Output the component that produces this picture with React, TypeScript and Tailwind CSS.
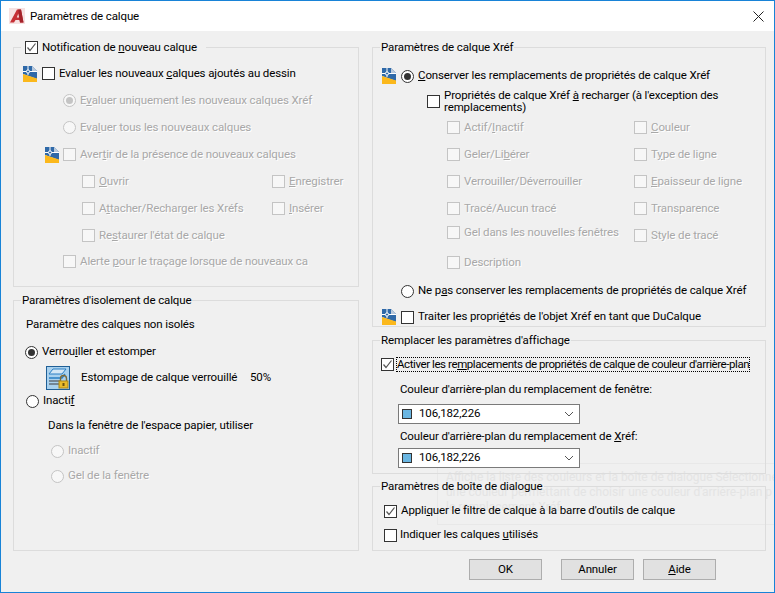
import type { ReactNode } from "react";

function LayerIcon() {
  return (
    <svg width="14" height="16" viewBox="0 0 14 16" className="shrink-0">
      <path d="M0 0H9L14 5V13L0 8Z" fill="#2f69a8" />
      <path d="M9 0L14 5H9Z" fill="#b9c9dc" />
      <path d="M0 8L14 12.5V16H0Z" fill="#fbb81c" />
      <path d="M0 5.5H14M5 0V9" stroke="#fff" strokeWidth="1" />
      <circle cx="5" cy="5.5" r="1.6" fill="#2f69a8" stroke="#fff" />
    </svg>
  );
}

function StackLockIcon() {
  return (
    <div className="w-6 h-6 border border-[#1f5f96] bg-[#a9d1ee] shrink-0">
      <svg width="22" height="22" viewBox="0 0 22 22">
        <path d="M2 7L6 2H19L15 7Z" fill="#d5e7f5" stroke="#2a7fc4" />
        <path d="M2 11H15L18 7" fill="none" stroke="#2a7fc4" strokeWidth="1.4" />
        <path d="M2 14H14" stroke="#5c6670" strokeWidth="1.4" />
        <path d="M2 17H12" stroke="#5c6670" strokeWidth="1.4" />
        <path d="M13.5 14V11.5A3 3 0 0 1 19.5 11.5V14" fill="none" stroke="#7b6a3a" strokeWidth="1.4" />
        <rect x="12" y="14" width="9" height="7" fill="#e8bb2a" stroke="#a98518" />
        <rect x="15.5" y="16" width="2" height="3" fill="#6d5410" />
      </svg>
    </div>
  );
}

function Logo() {
  return (
    <div className="w-4 h-4 bg-[#f6e2e2] flex items-center justify-center shrink-0">
      <svg width="16" height="16" viewBox="0 0 16 16">
        <path d="M1 14.5L8 1.5H12L14.5 14.5H11L10.5 12H6.5L5 14.5Z" fill="#c62f35" />
        <path d="M7.8 9.5H10L9.3 5.5Z" fill="#f6e2e2" />
        <path d="M12 1.5L14.5 14.5H11L9.2 1.5Z" fill="#a3232a" />
      </svg>
    </div>
  );
}

function Box({ checked, off }: { checked?: boolean; off?: boolean }) {
  return (
    <span
      className={
        off
          ? "w-[13px] h-[13px] border border-[#c4c4c4] bg-[#f7f7f7] shrink-0"
          : "w-[13px] h-[13px] border border-[#333333] bg-white shrink-0"
      }
    >
      {checked && (
        <svg width="11" height="11" viewBox="0 0 11 11" className="block">
          <path d="M1.5 5.5L4 8.5L9.5 1.5" fill="none" stroke="#555555" strokeWidth="1.2" />
        </svg>
      )}
    </span>
  );
}

function Dot({ checked, off }: { checked?: boolean; off?: boolean }) {
  return (
    <span
      className={
        off
          ? "w-[13px] h-[13px] rounded-full border border-[#c4c4c4] bg-[#f7f7f7] shrink-0 flex items-center justify-center"
          : "w-[13px] h-[13px] rounded-full border border-[#333333] bg-white shrink-0 flex items-center justify-center"
      }
    >
      {checked && (
        <span className={off ? "w-[7px] h-[7px] rounded-full bg-[#c4c4c4]" : "w-[7px] h-[7px] rounded-full bg-[#333333]"} />
      )}
    </span>
  );
}

function Label({ off, children }: { off?: boolean; children: ReactNode }) {
  return (
    <span className={off ? "whitespace-nowrap text-[#a8a8a8] [text-shadow:1px_1px_0_#fff]" : "whitespace-nowrap text-black"}>
      {children}
    </span>
  );
}

function Group({ title, className, children }: { title: ReactNode; className: string; children: ReactNode }) {
  return (
    <fieldset className={"border border-[#dcdcdc] min-w-0 " + className}>
      <legend className="ml-[7px] px-px h-4 leading-4 whitespace-nowrap">{title}</legend>
      {children}
    </fieldset>
  );
}

function Combo() {
  return (
    <div className="ml-[25px] w-[182px] h-[20px] border border-[#7a7a7a] bg-white flex items-center pl-[3px] pr-[5px]">
      <span className="w-[10px] h-[10px] border border-[#333333] bg-[#6ab6e2]" />
      <span className="ml-[7px]">106,182,226</span>
      <svg width="10" height="6" viewBox="0 0 10 6" className="ml-auto">
        <path d="M1 1L5 5L9 1" fill="none" stroke="#555555" />
      </svg>
    </div>
  );
}

function Button({ className, children }: { className: string; children: ReactNode }) {
  return (
    <button className={"w-[73px] h-[21px] border border-[#adadad] bg-[#e1e1e1] text-black leading-none " + className}>
      {children}
    </button>
  );
}

const xrefLeft: ReactNode[] = [
  <>Actif/<u>I</u>nactif</>,
  <>Geler/Li<u>b</u>érer</>,
  <>Verrouiller/Déverrouiller</>,
  <>Tracé/Aucun tracé</>,
  <>Gel dans les nouvelles fenêtres</>,
  <>Description</>,
];

const xrefRight: ReactNode[] = [
  <><u>C</u>ouleur</>,
  <>T<u>y</u>pe de ligne</>,
  <><u>E</u>paisseur de ligne</>,
  <>Transparence</>,
  <>Style de tracé</>,
];

export default function App() {
  return (
    <div
      className="relative w-[775px] h-[593px] border border-[#1883d7] bg-[#f0f0f0] overflow-hidden text-[11.5px] tracking-[-0.12px] text-black"
      style={{ fontFamily: 'Roboto, "Noto Sans", sans-serif' }}
    >
      {/* title bar */}
      <div className="h-[30px] bg-white flex items-center pl-2 pr-[10px]">
        <Logo />
        <span className="ml-[5px] mt-px">Paramètres de calque</span>
        <svg width="11" height="11" viewBox="0 0 11 11" className="ml-auto">
          <path d="M0.5 0.5L10.5 10.5M10.5 0.5L0.5 10.5" stroke="#222222" />
        </svg>
      </div>

      {/* ghost of a fading tooltip */}
      <div className="absolute left-[436px] top-[462px] w-[340px] h-[62px] border border-[#e8e8e8] pl-2 pt-[6px] leading-[15px] text-[#e4e4e4] text-[12px] tracking-normal whitespace-nowrap">
        <div>Affiche la liste des couleurs et la boîte de dialogue Sélectionner</div>
        <div>une couleur permettant de choisir une couleur d'arrière-plan p</div>
        <div>le remplacement Xréf</div>
      </div>

      <div className="relative z-10 flex pt-2 pl-3 gap-[13px]">
        {/* left column */}
        <div className="w-[346px] flex flex-col gap-[5px]">
          <Group
            className="h-[248px]"
            title={
              <span className="flex items-center gap-1 pl-[3px] pr-2">
                <Box checked />
                <span>Notification de <u>n</u>ouveau calque</span>
              </span>
            }
          >
            <div className="pt-[5px] flex flex-col [&>div]:h-[27px] [&>div]:flex [&>div]:items-center">
              <div className="pl-[9px]">
                <LayerIcon />
                <span className="ml-[5px] mr-1 flex"><Box /></span>
                <Label>Evaluer les nouveaux <u>c</u>alques ajoutés au dessin</Label>
              </div>
              <div className="pl-[49px] gap-1">
                <Dot checked off />
                <Label off>E<u>v</u>aluer uniquement les nouveaux calques Xréf</Label>
              </div>
              <div className="pl-[49px] gap-1">
                <Dot off />
                <Label off>Eva<u>l</u>uer tous les nouveaux calques</Label>
              </div>
              <div className="pl-[31px]">
                <LayerIcon />
                <span className="ml-1 mr-1 flex"><Box off /></span>
                <Label off>Aver<u>t</u>ir de la présence de nouveaux calques</Label>
              </div>
              <div className="pl-[68px]">
                <div className="w-[190px] flex items-center gap-1">
                  <Box off />
                  <Label off><u>O</u>uvrir</Label>
                </div>
                <Box off />
                <span className="ml-1"><Label off><u>E</u>nregistrer</Label></span>
              </div>
              <div className="pl-[68px]">
                <div className="w-[190px] flex items-center gap-1">
                  <Box off />
                  <Label off>A<u>t</u>tacher/Recharger les Xréfs</Label>
                </div>
                <Box off />
                <span className="ml-1"><Label off><u>I</u>nsérer</Label></span>
              </div>
              <div className="pl-[68px] gap-1">
                <Box off />
                <Label off>Re<u>s</u>taurer l'état de calque</Label>
              </div>
              <div className="pl-[49px] gap-1 -mt-px">
                <Box off />
                <Label off>Alerte <u>p</u>our le traçage lorsque de nouveaux ca</Label>
              </div>
            </div>
          </Group>

          <Group className="h-[259px]" title="Paramètres d'isolement de calque">
            <div className="pl-3 pt-2 flex flex-col">
              <div className="h-[17px] leading-[17px]">Paramètre des calques non isolés</div>
              <div className="mt-[11px] h-4 flex items-center gap-1 -ml-px">
                <Dot checked />
                <Label>Verrou<u>i</u>ller et estomper</Label>
              </div>
              <div className="mt-[6px] h-6 flex items-center pl-[20px]">
                <StackLockIcon />
                <span className="ml-[11px] w-[169px]">Estompage de calque verrouillé</span>
                <span className="-mt-px">50%</span>
              </div>
              <div className="mt-[3px] h-[16px] flex items-center gap-1">
                <Dot />
                <Label>Inacti<u>f</u></Label>
              </div>
              <div className="mt-[8px] h-4 leading-4 pl-[22px]">Dans la fenêtre de l'espace papier, utiliser</div>
              <div className="mt-[10px] h-4 flex items-center gap-1 pl-[25px]">
                <Dot off />
                <Label off>Inactif</Label>
              </div>
              <div className="mt-[9px] h-4 flex items-center gap-1 pl-[25px]">
                <Dot off />
                <Label off>Gel de la fenêtre</Label>
              </div>
            </div>
          </Group>
        </div>

        {/* right column */}
        <div className="w-[394px] flex flex-col">
          <Group className="h-[288px]" title="Paramètres de calque Xréf">
            <div className="pl-[9px] flex flex-col">
              <div className="h-4 mt-[13px] flex items-center">
                <LayerIcon />
                <span className="ml-[5px] mr-1 flex"><Dot checked /></span>
                <Label><u>C</u>onserver les remplacements de propriétés de calque Xréf</Label>
              </div>
              <div className="mt-[5px] flex items-center pl-[45px] gap-1">
                <Box />
                <span className="leading-3 w-[320px]">
                  Propriétés de calque Xréf <u>à</u> recharger (à l'exception des remplacements)
                </span>
              </div>
              <div className="mt-px pl-[65px] flex">
                <div className="w-[187px] flex flex-col">
                  {xrefLeft.map((text, i) => (
                    <div key={i} className={i === 4 ? "h-[27px] -mt-[3px] flex items-center gap-1" : i === 5 ? "h-[27px] mt-[3px] flex items-center gap-1" : "h-[27px] flex items-center gap-1"}>
                      <Box off />
                      <Label off>{text}</Label>
                    </div>
                  ))}
                </div>
                <div className="flex flex-col">
                  {xrefRight.map((text, i) => (
                    <div key={i} className="h-[27px] flex items-center gap-1">
                      <Box off />
                      <Label off>{text}</Label>
                    </div>
                  ))}
                </div>
              </div>
              <div className="mt-[7px] h-4 flex items-center pl-[19px] gap-1">
                <Dot />
                <Label>Ne p<u>a</u>s conserver les remplacements de propriétés de calque Xréf</Label>
              </div>
              <div className="mt-[10px] h-4 flex items-center">
                <LayerIcon />
                <span className="ml-[5px] mr-1 flex"><Box /></span>
                <Label>Traiter les propri<u>é</u>tés de l'objet Xréf en tant que DuCalque</Label>
              </div>
            </div>
          </Group>

          <Group className="h-[142px] mt-[5px]" title="Remplacer les paramètres d'affichage">
            <div className="flex flex-col">
              <div className="mt-2 h-[16px] pl-2 flex items-center">
                <Box checked />
                <span className="ml-[2px] w-[354px] h-[15px] leading-[13px] tracking-[-0.42px] border border-dotted border-black whitespace-nowrap overflow-hidden">
                  Activer les re<u>m</u>placements de propriétés de calque de couleur d'arrière-plan
                </span>
              </div>
              <div className="mt-[9px] h-4 leading-4 pl-[27px]">Couleur d'arrière-plan du remplacement de fenêtre:</div>
              <div className="mt-[7px]"><Combo /></div>
              <div className="mt-1 h-4 leading-4 pl-[27px]">Couleur d'arrière-plan du remplacement de <u>X</u>réf:</div>
              <div className="mt-1"><Combo /></div>
            </div>
          </Group>

          <Group className="h-[73px] mt-1" title="Paramètres de boîte de dialogue">
            <div className="pl-[11px] flex flex-col">
              <div className="mt-[9px] h-4 flex items-center gap-1">
                <Box checked />
                <Label>Appli<u>q</u>uer le filtre de calque à la barre d'outils de calque</Label>
              </div>
              <div className="mt-2 h-4 flex items-center gap-[3px]">
                <Box />
                <Label>Indiquer les calques <u>u</u>tilisés</Label>
              </div>
            </div>
          </Group>
        </div>
      </div>

      {/* buttons */}
      <div className="relative z-10 mt-2 flex pr-[58px] justify-end">
        <Button className="">OK</Button>
        <Button className="ml-[19px]">Annuler</Button>
        <Button className="ml-[9px]"><u>A</u>ide</Button>
      </div>
    </div>
  );
}
